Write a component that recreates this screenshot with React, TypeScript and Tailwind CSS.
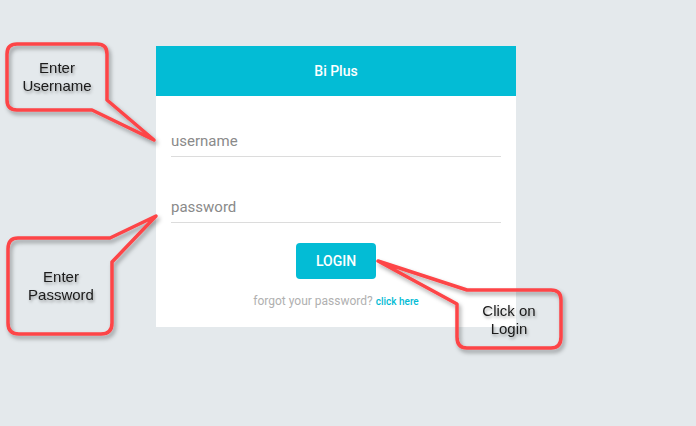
import React from "react";

const calloutFont = { fontFamily: '"Liberation Sans", Arial, sans-serif' };

function Callouts() {
  return (
    <svg
      className="pointer-events-none absolute left-0 top-0"
      width={696}
      height={426}
      viewBox="0 0 696 426"
    >
      <defs>
        <filter id="shade" x="-20%" y="-20%" width="140%" height="140%">
          <feDropShadow dx="2" dy="3" stdDeviation="2" floodColor="#000" floodOpacity="0.35" />
        </filter>
        <filter id="textShade" x="-20%" y="-40%" width="140%" height="180%">
          <feDropShadow dx="1" dy="2" stdDeviation="1.5" floodColor="#000" floodOpacity="0.35" />
        </filter>
      </defs>
      <g fill="none" stroke="#fd4447" strokeWidth={3.5} strokeLinejoin="round" filter="url(#shade)">
        {/* username */}
        <path d="M17 44 H97 Q107 44 107 54 V100 L154 140 L92 110 H17 Q7 110 7 100 V54 Q7 44 17 44 Z" />
        {/* password */}
        <path d="M18 238 H110 L156 216 L112 262 V323 Q112 334 101 334 H19 Q8 334 8 323 V249 Q8 238 18 238 Z" />
        {/* login */}
        <path d="M378 261 L467 290 H551 Q561 290 561 300 V337 Q561 348 551 348 H467 Q457 348 457 337 V304 Z" />
      </g>
      <g fill="#1a1a1a" fontSize={15} style={calloutFont} textAnchor="middle" filter="url(#textShade)">
        <text x={57} y={73}>Enter</text>
        <text x={57} y={91}>Username</text>
        <text x={61} y={282}>Enter</text>
        <text x={61} y={300}>Password</text>
        <text x={509} y={316}>Click on</text>
        <text x={509} y={334}>Login</text>
      </g>
    </svg>
  );
}

export default function App() {
  return (
    <div
      className="relative h-[426px] w-[696px] overflow-hidden bg-[#e4e9ec] pl-[156px] pt-[46px]"
      style={{ fontFamily: 'Roboto, "Liberation Sans", sans-serif' }}
    >
      <div className="w-[360px] bg-white pb-[16px]">
        <div className="flex h-[50px] items-center justify-center bg-[#03bcd5] text-[14px] font-medium text-white">
          Bi Plus
        </div>
        <div className="flex flex-col px-[15px]">
          <input
            placeholder="username"
            className="mt-[24px] h-[37px] border-b border-[#dcdcdc] pt-[5px] text-[15px] text-[#555] outline-none placeholder:text-[#8a8a8a]"
          />
          <input
            type="password"
            placeholder="password"
            className="mt-[29px] h-[37px] border-b border-[#dcdcdc] pt-[5px] text-[15px] text-[#555] outline-none placeholder:text-[#8a8a8a]"
          />
          <button className="mx-auto mt-[20px] h-[36px] w-[80px] rounded-[4px] bg-[#03bcd5] text-[14px] font-medium text-white">
            LOGIN
          </button>
          <p className="mt-[13px] text-center text-[12px] leading-[18px] text-[#b0b0b0]">
            forgot your password?{" "}
            <span className="text-[10px] font-medium text-[#03bcd5]">click here</span>
          </p>
        </div>
      </div>
      <Callouts />
    </div>
  );
}
